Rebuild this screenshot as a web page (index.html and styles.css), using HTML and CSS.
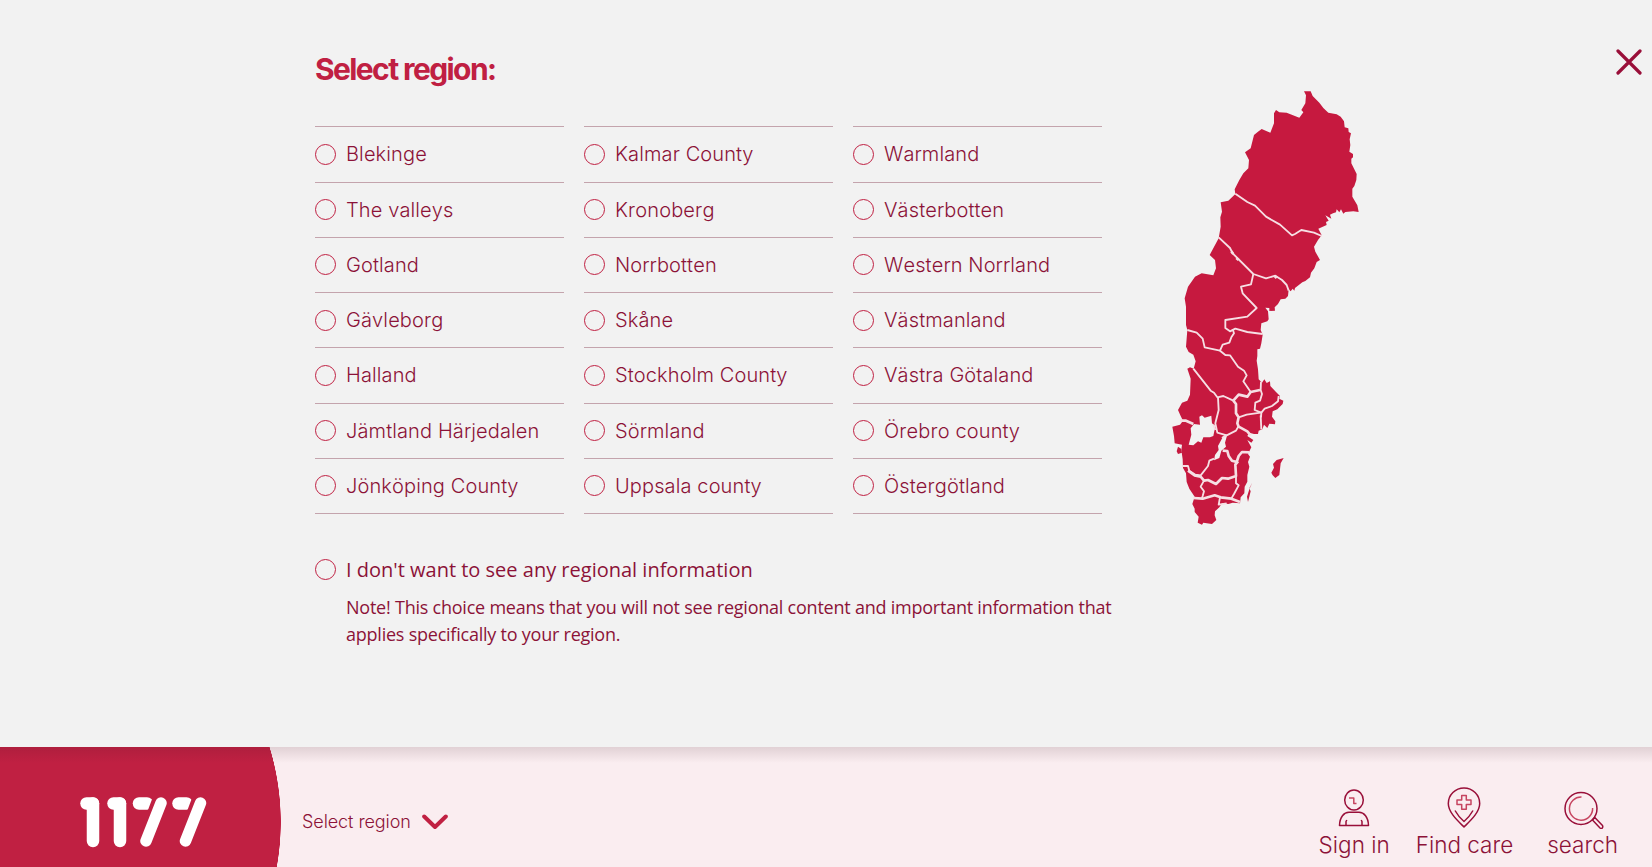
FILE: index.html
```html
<!DOCTYPE html>
<html lang="en">
<head>
<meta charset="utf-8">
<title>Select region</title>
<link rel="stylesheet" href="styles.css">
</head>
<body>
<main class="panel">
  <section class="chooser">
    <h1 class="title">Select region:</h1>
    <div class="columns">
      <ul class="list">
        <li class="item"><i class="radio"></i>Blekinge</li>
        <li class="item"><i class="radio"></i>The valleys</li>
        <li class="item"><i class="radio"></i>Gotland</li>
        <li class="item"><i class="radio"></i>Gävleborg</li>
        <li class="item"><i class="radio"></i>Halland</li>
        <li class="item"><i class="radio"></i>Jämtland Härjedalen</li>
        <li class="item"><i class="radio"></i>Jönköping County</li>
      </ul>
      <ul class="list">
        <li class="item"><i class="radio"></i>Kalmar County</li>
        <li class="item"><i class="radio"></i>Kronoberg</li>
        <li class="item"><i class="radio"></i>Norrbotten</li>
        <li class="item"><i class="radio"></i>Skåne</li>
        <li class="item"><i class="radio"></i>Stockholm County</li>
        <li class="item"><i class="radio"></i>Sörmland</li>
        <li class="item"><i class="radio"></i>Uppsala county</li>
      </ul>
      <ul class="list">
        <li class="item"><i class="radio"></i>Warmland</li>
        <li class="item"><i class="radio"></i>Västerbotten</li>
        <li class="item"><i class="radio"></i>Western Norrland</li>
        <li class="item"><i class="radio"></i>Västmanland</li>
        <li class="item"><i class="radio"></i>Västra Götaland</li>
        <li class="item"><i class="radio"></i>Örebro county</li>
        <li class="item"><i class="radio"></i>Östergötland</li>
      </ul>
    </div>
    <div class="none"><i class="radio"></i><span class="none-label">I don't want to see any regional information</span></div>
    <p class="note">Note! This choice means that you will not see regional content and important information that<br>applies specifically to your region.</p>
  </section>
  <svg class="map" viewBox="0 0 660 1380" aria-label="Map of Sweden">
    <path class="land" d="M432 34L452 34 458 48 478 68 490 84 505 98 530 103 542 110 552 124 554 142 565 145 566 156 573 160 569 178 571 195 568 215 579 222 579 232 574 236 574 250 590 282 589 300 583 318 577 326 577 350 592 376 596 396 580 394 556 396 550 401 543 388 538 397 530 388 528 397 519 400 510 404 514 416 496 406 506 422 498 426 500 435 475 446 485 466 474 480 462 500 466 515 480 540 470 546 463 565 453 578 450 592 436 603 427 607 405 624 403 632 398 626 392 634 386 628 384 648 376 656 362 658 354 672 344 682 345 692 328 693 328 684 316 683 324 694 326 718 322 724 304 730 302 750 308 764 304 790 300 806 292 808 292 828 290 842 294 868 296 898 306 908 313 898 320 909 330 904 331 918 348 936 360 948 358 956 370 962 368 972 352 988 338 994 336 1010 346 1024 345 1033 328 1031 322 1044 312 1034 307 1048 296 1052 294 1062 282 1062 268 1058 262 1068 280 1080 274 1088 262 1080 274 1102 268 1114 264 1122 270 1130 264 1146 268 1160 262 1185 262 1205 254 1220 253 1240 242 1252 240 1270 218 1268 205 1272 186 1270 178 1282 165 1294 164 1306 169 1320 156 1332 130 1328 126 1334 113 1328 116 1310 104 1296 104 1286 97 1272 104 1250 88 1226 80 1206 78 1180 69 1164 68 1138 64 1110 66 1094 44 1090 42 1068 37 1040 60 1034 69 1022 62 1008 54 990 66 968 82 962 90 944 92 896 82 866 90 862 101 866 107 844 100 824 86 816 78 800 82 750 78 735 78 680 74 655 84 620 105 590 125 580 160 586 168 565 165 540 149 525 176 475 182 440 181 412 186 395 182 367 205 362 226 342 224 328 238 300 250 280 265 265 267 240 255 217 272 205 282 165 292 157 305 147 331 158 342 130 342 100 348 90 358 97 380 98 418 113 430 97 424 90 436 70 438 46Z"/>
    <g transform="translate(0 660)">
      <path class="land" d="M371 474L362 490 358 525 346 534 338 526 334 518 342 503 339 492 350 480ZM277 548L268 565 272 574 264 606 261 590 268 568ZM54 440L63 446 66 458 54 462 50 454Z"/>
      <path class="water" d="M118 350L126 346 134 353 154 347 156 370 166 378 160 408 150 412 130 412 124 428 114 424 100 436 86 434 94 404 92 385 102 372 120 374Z"/>
      <path class="water" d="M190 408L201 407 195 428 198 440 184 452 178 474 162 481 165 465 176 450 174 438Z"/>
    </g>
    <g class="border">
      <path d="M226 341L262 366 285 377 318 410 360 434 396 466 405 462 424 450 462 458 485 468"/>
      <path d="M176 472L210 504 218 520 280 582 318 595 346 587 366 600 380 615 386 632"/>
      <path class="wide" d="M214 514L220 522M229 534L236 540M344 588L350 594"/>
      <path d="M280 582L273 613 243 620 248 640 290 684 262 710 196 720 196 744 210 754 226 746 262 756 308 762"/>
      <path d="M82 750L110 758 128 776 134 802 180 812 188 794 208 788 214 772 222 760 218 748"/>
      <path d="M180 812L196 825 210 826 234 860 252 872 260 886 250 904 272 936"/>
      <path d="M100 866L152 932 162 938 172 952 190 948 220 962"/>
      <path d="M174 952L176 990 166 1030 172 1058 200 1066 228 1052 236 1038"/>
      <path class="wide" d="M220 962L236 944 262 950 272 936 300 930"/>
      <path d="M303 905L302 930 306 942 300 962 286 968 284 990 304 998 303 1012"/>
      <path d="M304 998L314 986 336 978 354 964 356 948"/>
      <path class="wide" d="M220 962L228 972 228 1000 236 1012 232 1030 236 1040 262 1054 272 1066"/>
      <path d="M236 1012L260 1004 302 998"/>
      <path d="M302 1006L304 1048"/>
      <path class="wide" d="M60 1022L78 1022 100 1032"/>
      <path d="M160 1034L166 1050"/>
      <path d="M200 1064L186 1074"/>
      <path class="wide" d="M188 1112L202 1113 206 1128 216 1142 230 1146 236 1128 246 1116 268 1117"/>
      <path d="M162 1136L148 1142 144 1158 122 1186 106 1184 88 1172 84 1158 68 1158"/>
      <path class="wide" d="M84 1172L104 1186 122 1190 132 1202 144 1200 168 1212 186 1194 204 1196 228 1188 226 1154 234 1144"/>
      <path d="M228 1188L228 1210 236 1216 222 1242 214 1256"/>
      <path d="M132 1202L122 1220 132 1234 128 1248 126 1254"/>
      <path class="wide" d="M100 1254L128 1256 164 1246 182 1252 214 1256 240 1266"/>
      <path d="M180 1252L176 1274 200 1270"/>
    </g>
  </svg>
  <button class="close" aria-label="Close"><svg viewBox="0 0 26 26" width="26" height="26"><path d="M2 2L24 24M24 2L2 24"/></svg></button>
</main>
<footer class="bar">
  <div class="brand">
    <svg class="logo" viewBox="0 0 128 52" role="img" aria-label="1177 logo">
      <line x1="7.500" y1="7.5" x2="14" y2="7.5"/><line x1="14" y1="7.5" x2="14" y2="45"/>
      <line x1="34.500" y1="7.5" x2="41" y2="7.5"/><line x1="41" y1="7.5" x2="41" y2="45"/>
      <line x1="60" y1="7.5" x2="68" y2="7.5"/>
      <line class="gap" x1="80.500" y1="7.5" x2="66.500" y2="45"/>
      <line class="stem" x1="82" y1="7" x2="67" y2="45"/>
      <line x1="99.5" y1="7.5" x2="107.5" y2="7.5"/>
      <line class="gap" x1="120" y1="7.5" x2="106" y2="45"/>
      <line class="stem" x1="121.500" y1="7" x2="106.500" y2="45"/>
    </svg>
  </div>
  <div class="picker"><span class="picker-label">Select region</span>
    <svg class="chevron" viewBox="0 0 26 16" width="26" height="16"><path d="M2.2 2.5L13 13L23.8 2.5"/></svg>
  </div>
  <nav class="actions">
    <a class="action signin"><svg class="icon" viewBox="0 0 34 42" width="34" height="42">
      <ellipse cx="17" cy="13" rx="9.3" ry="10"/><path d="M2.5 38.5C2.7 30 7 25.300 12 25.300H22C27 25.300 31.300 30 31.500 38.500ZM9 38V34.500L9.800 33M25 38V34.500L24.200 33"/><path class="soft" d="M12 11H16.800V16.500H19.500"/></svg><span>Sign in</span></a>
    <a class="action care"><svg class="icon" viewBox="0 0 34 42" width="34" height="42">
      <path d="M17 40C11 34 1.300 25.500 1.300 16.500A15.700 15.500 0 0 1 32.700 16.500C32.700 25.500 23 34 17 40ZM8 23.500C10.500 28 13.500 31.500 17 34.500C20.500 31.500 23.500 28 26 23.500"/><path class="soft" d="M14.700 8.500H19.300V13H24V17.600H19.300V22.300H14.700V17.600H10V13H14.700Z"/></svg><span>Find care</span></a>
    <a class="action search"><svg class="icon" viewBox="0 0 42 42" width="42" height="42">
      <circle cx="18" cy="21.500" r="16"/><path d="M29.500 33L31.800 30.500L39.500 38.500C40.500 41 38.500 42 37 41Z"/><path class="soft" d="M18.500 10A11.600 11.600 0 1 0 29.600 21"/></svg><span>search</span></a>
  </nav>
</footer>
</body>
</html>
```
FILE: styles.css
```css
* { box-sizing: border-box; }
body { margin: 0; width: 1652px; height: 867px; overflow: hidden; display: flex; flex-direction: column; background: #f1f1f1; color: #8c1238; font-family: Inter, "Liberation Sans", sans-serif; }
.panel { height: 747px; display: flex; align-items: flex-start; padding-left: 315px; background: #f2f2f2; }
.chooser { width: 845px; flex: none; padding-top: 50px; }
.title { margin: 0; height: 76.4px; font-size: 30px; line-height: 39px; font-weight: 700; letter-spacing: -1.6px; color: #c02042; }
.columns { display: grid; grid-template-columns: repeat(3, 249px); gap: 20px; }
.list { margin: 0; padding: 0; list-style: none; border-top: 1px solid #c4a4ad; }
.item { height: 55.25px; display: flex; align-items: center; gap: 10px; padding-bottom: .4px; border-bottom: 1px solid #c4a4ad; font-size: 20px; font-weight: 350; font-kerning: none; letter-spacing: .12px; white-space: nowrap; }
.radio { flex: none; width: 21px; height: 21px; border: 1px solid #c02042; border-radius: 50%; }
.none { display: flex; align-items: center; gap: 10px; height: 30px; margin-top: 40.6px; font: 400 20px/30px "Open Sans", sans-serif; }
.note { margin: 9px 0 0 31px; font: 400 18px/27px "Open Sans", sans-serif; letter-spacing: -.23px; white-space: nowrap; }
.map { flex: none; width: 220px; height: 460px; margin-top: 80px; }
.land { fill: #c6193f; }
.water { fill: #f2f2f2; }
.border { fill: none; stroke: #f6dfe4; stroke-width: 5.500; stroke-linejoin: round; }
.wide { stroke-width: 8; }
.close { margin: 49.300px 0 0 236px; padding: 0; border: 0; background: none; width: 26px; height: 26px; }
.close svg { display: block; fill: none; stroke: #990f39; stroke-width: 3.200; stroke-linecap: round; }
.bar { position: relative; height: 120px; display: flex; background: #faedf0; overflow: hidden; }
.bar::after { content: ""; position: absolute; inset: 0 0 auto; height: 16px; background: linear-gradient(rgba(60, 20, 30, .13), transparent); }
.brand { flex: none; width: 281px; height: 120px; padding: 49px 0 0 79px; background: radial-gradient(circle 256px at 25px 75px, #c02042 255.500px, transparent 256px); }
.logo { display: block; width: 128px; height: 52px; fill: none; stroke: #fff; stroke-width: 12.500; stroke-linecap: round; }
.logo .gap { stroke: #c02042; stroke-width: 17; }
.logo .stem { stroke-width: 11.500; }
.picker { display: flex; align-items: center; gap: 11px; height: 30px; margin: 60px 0 0 21px; font-size: 18px; font-weight: 340; letter-spacing: -.08px; }
.picker-label { padding-bottom: 2px; }
.chevron { fill: none; stroke: #c02042; stroke-width: 4; stroke-linecap: round; stroke-linejoin: round; }
.actions { display: flex; align-items: flex-start; margin: 39px 34px 0 auto; }
.action { display: flex; flex-direction: column; align-items: center; gap: 1px; font-size: 22.500px; line-height: 31px; font-weight: 340; white-space: nowrap; }
.care { margin-left: 26px; }
.search { margin-left: 34px; }
.icon { position: relative; top: 1px; display: block; fill: none; stroke: #990f39; stroke-width: 1.500; stroke-linejoin: round; }
.search .icon { left: 1px; }
.soft { stroke: #c64560; }
```
